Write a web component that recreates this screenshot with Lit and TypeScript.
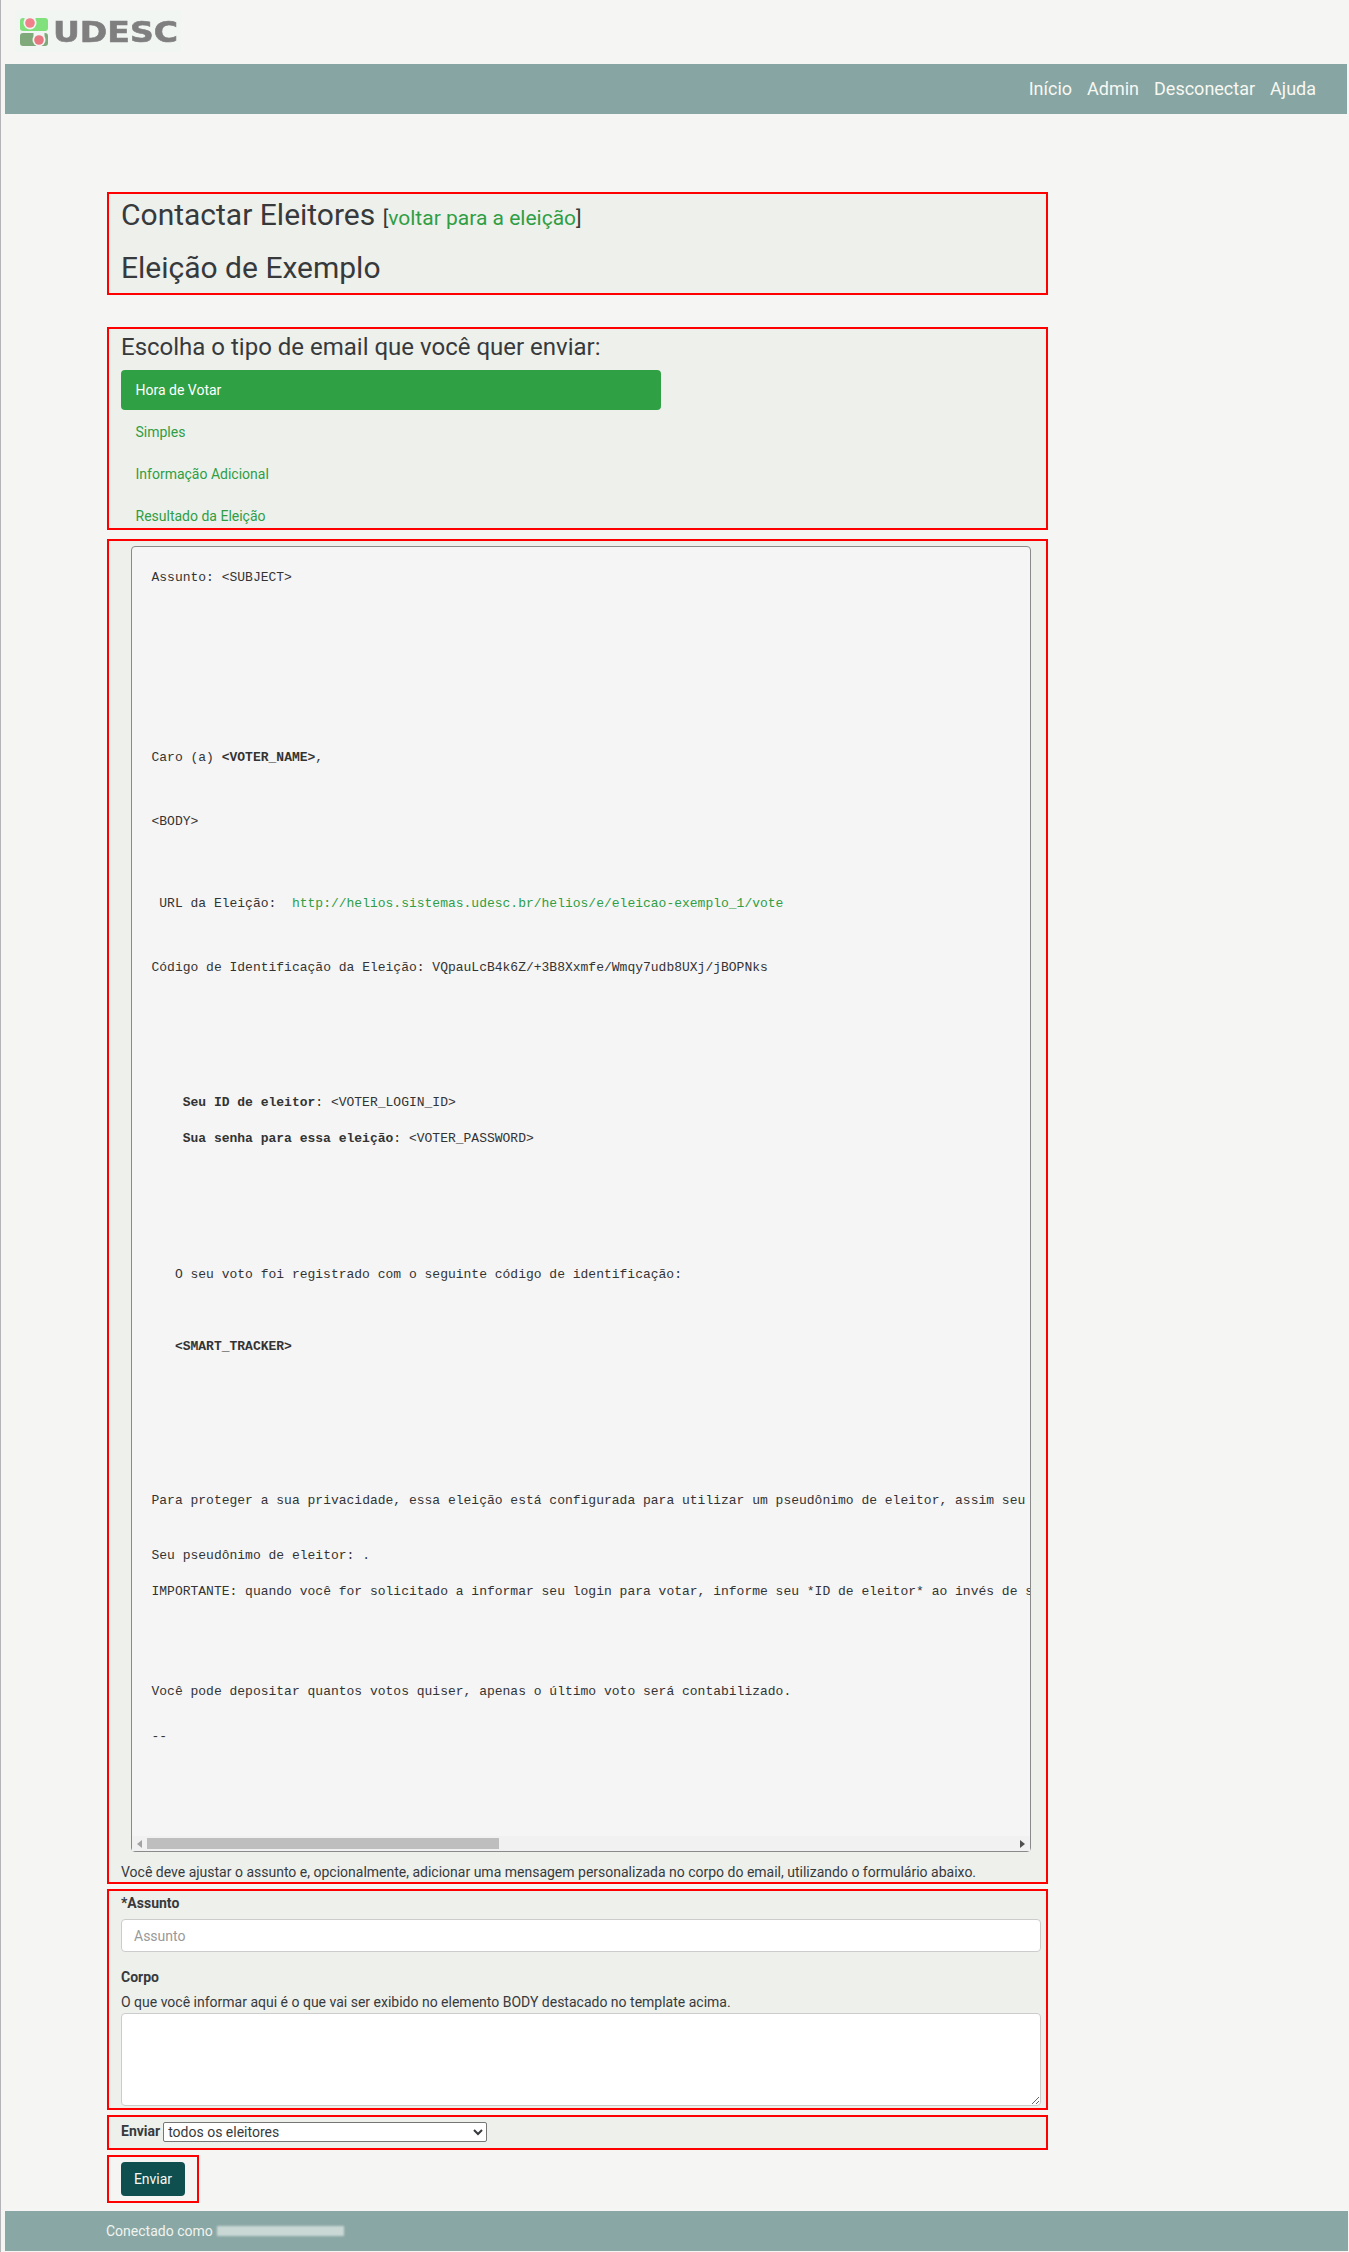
import { LitElement, html, css } from 'lit';
import { customElement } from 'lit/decorators.js';

type Line = { gap: number; indent?: number; content: unknown };

// gap = space above the line, indent in monospace chars
const LINES: Line[] = [
  { gap: 0, content: 'Assunto: <SUBJECT>' },
  { gap: 162, content: html`Caro (a) <strong>&lt;VOTER_NAME&gt;</strong>,` },
  { gap: 46, content: '<BODY>' },
  { gap: 64, indent: 1, content: html`URL da Eleição:  <a href="#">http://helios.sistemas.udesc.br/helios/e/eleicao-exemplo_1/vote</a>` },
  { gap: 46, content: 'Código de Identificação da Eleição: VQpauLcB4k6Z/+3B8Xxmfe/Wmqy7udb8UXj/jBOPNks' },
  { gap: 117, indent: 4, content: html`<strong>Seu ID de eleitor</strong>: &lt;VOTER_LOGIN_ID&gt;` },
  { gap: 18, indent: 4, content: html`<strong>Sua senha para essa eleição</strong>: &lt;VOTER_PASSWORD&gt;` },
  { gap: 118, indent: 3, content: 'O seu voto foi registrado com o seguinte código de identificação:' },
  { gap: 54, indent: 3, content: html`<strong>&lt;SMART_TRACKER&gt;</strong>` },
  { gap: 136, content: 'Para proteger a sua privacidade, essa eleição está configurada para utilizar um pseudônimo de eleitor, assim seu voto não será associado ao seu nome.' },
  { gap: 37, content: 'Seu pseudônimo de eleitor: .' },
  { gap: 18, content: 'IMPORTANTE: quando você for solicitado a informar seu login para votar, informe seu *ID de eleitor* ao invés de seu login habitual.' },
  { gap: 82, content: 'Você pode depositar quantos votos quiser, apenas o último voto será contabilizado.' },
  { gap: 27, content: '--' },
];

const NAV = ['Início', 'Admin', 'Desconectar', 'Ajuda'];
const TEMPLATES = ['Hora de Votar', 'Simples', 'Informação Adicional', 'Resultado da Eleição'];

@customElement('app-root')
export class AppRoot extends LitElement {
  static styles = css`
    :host {
      display: block;
      box-sizing: border-box;
      width: 1349px;
      height: 2252px;
      border-left: 1px solid #b4b4b8;
      background: #f5f5f3;
      color: #373a3c;
      font-family: Roboto, "Liberation Sans", sans-serif;
      font-size: 14px;
      line-height: 21px;
      overflow: hidden;
    }

    a {
      color: #2f9e44;
      text-decoration: none;
    }

    .top {
      height: 64px;
      padding: 10px 0 0 14px;
      box-sizing: border-box;
    }

    .logo {
      display: block;
      width: 166px;
      height: 42px;
      background: #f2f6f3;
    }

    .logo-text {
      font-family: "DejaVu Sans", sans-serif;
      font-weight: 700;
      font-size: 29px;
      fill: #7f7f7f;
      stroke: #7f7f7f;
      stroke-width: 0.6px;
    }

    .navbar {
      display: flex;
      justify-content: flex-end;
      align-items: center;
      gap: 15px;
      height: 50px;
      box-sizing: border-box;
      margin: 0 2px 0 4px;
      padding: 0 31px 2px 0;
      background: #86a5a3;
    }

    .navbar a {
      color: #f8f8f2;
      font-size: 18px;
    }

    main {
      width: 941px;
      margin: 78px 0 0 106px;
    }

    .box {
      box-sizing: border-box;
      border: 2px solid #f00;
      background: #eef0ec;
      padding: 0 5px 0 12px;
    }

    .title {
      height: 103px;
    }

    .title h2,
    .title h3 {
      margin: 0;
      font-size: 30px;
      font-weight: 400;
      line-height: 42px;
    }

    .title h3 {
      margin-top: 11px;
    }

    .title small {
      font-size: 21px;
      line-height: 1;
    }

    .choose {
      margin-top: 32px;
    }

    .choose h4 {
      margin: 0;
      font-size: 24px;
      font-weight: 400;
      line-height: 36px;
    }

    .pills {
      display: flex;
      flex-direction: column;
      gap: 2px;
      margin: 5px 0 -8px;
    }

    .pills a {
      display: block;
      width: 540px;
      height: 40px;
      box-sizing: border-box;
      padding: 9.5px 14.5px;
      border-radius: 4px;
    }

    .pills a.active {
      background: #30a045;
      color: #fff;
    }

    .preview {
      margin-top: 9px;
      padding-top: 5px;
    }

    .mail {
      display: flex;
      flex-direction: column;
      box-sizing: border-box;
      width: 900px;
      height: 1306px;
      margin-left: 10px;
      border: 1px solid #8a8a8a;
      border-radius: 4px;
      background: #f5f5f5;
    }

    .mail-body {
      flex: 1;
      overflow: hidden;
      padding: 22px 0 0 19.5px;
      font-family: "Liberation Mono", monospace;
      font-size: 13px;
      line-height: 18px;
      color: #333;
    }

    .mail-line {
      white-space: pre;
    }

    .scrollbar {
      display: flex;
      height: 15px;
      background: #f1f1f1;
    }

    .scroll-btn {
      display: flex;
      align-items: center;
      justify-content: center;
      width: 15px;
    }

    .scroll-track {
      flex: 1;
      padding-top: 2px;
    }

    .scroll-thumb {
      width: 352px;
      height: 11px;
      background: #bebebe;
    }

    .hint {
      margin: 11px 0 0;
      line-height: 19px;
    }

    .fields {
      margin-top: 5px;
      padding-top: 2px;
      padding-bottom: 2px;
    }

    label {
      display: block;
      font-weight: 700;
    }

    .control {
      display: block;
      box-sizing: border-box;
      width: 920px;
      border: 1px solid #ccc;
      border-radius: 4px;
      background: #fff;
      font: inherit;
      padding: 5px 12px;
      outline: none;
    }

    input.control {
      height: 33px;
      margin-top: 5px;
    }

    input.control::placeholder {
      color: #999;
      opacity: 1;
    }

    .corpo {
      margin-top: 15px;
    }

    .help {
      margin: 4px 0 0;
    }

    textarea.control {
      height: 93px;
      resize: vertical;
    }

    .send-to {
      display: flex;
      align-items: center;
      gap: 3px;
      margin-top: 5px;
      padding-top: 4px;
      padding-bottom: 6px;
    }

    .send-to select {
      box-sizing: border-box;
      width: 324px;
      height: 20px;
      padding: 0;
      font: inherit;
      color: #373a3c;
      background: #fff;
      border: 1px solid #767676;
      border-radius: 2px;
    }

    .submit {
      width: 92px;
      margin-top: 5px;
      padding: 5px 12px;
      background: transparent;
    }

    .submit button {
      display: block;
      width: 64px;
      height: 34px;
      padding: 0;
      border: 0;
      border-radius: 4px;
      background: #0f4f4f;
      color: #f8f8f2;
      font: inherit;
    }

    footer {
      display: flex;
      align-items: center;
      gap: 4px;
      height: 40px;
      margin: 8px 1px 0 4px;
      padding-left: 101px;
      background: #89a7a5;
      color: #f0f4ef;
    }

    .masked {
      width: 127px;
      height: 10px;
      background: #c9d8d5;
      filter: blur(1px);
    }
  `;

  renderLogo() {
    return html`
      <svg class="logo" viewBox="0 0 166 42" role="img" aria-label="UDESC">
        <g style="filter: blur(0.6px)">
          <rect x="5" y="8" width="28" height="13" rx="3" fill="#80e07c" />
          <rect x="5" y="23" width="28" height="13" rx="3" fill="#7fa97a" />
          <circle cx="15" cy="13" r="6.5" fill="#f2f6f3" />
          <rect x="9.5" y="6" width="11" height="7" fill="#f2f6f3" />
          <circle cx="24" cy="30" r="6.5" fill="#f2f6f3" />
          <rect x="18.5" y="22" width="11" height="8" fill="#f2f6f3" />
          <circle cx="15" cy="13" r="4.8" fill="#f0808a" />
          <circle cx="24" cy="30" r="4.8" fill="#e87680" />
          <text class="logo-text" x="38" y="32" textLength="125" lengthAdjust="spacingAndGlyphs">UDESC</text>
        </g>
      </svg>
    `;
  }

  render() {
    return html`
      <div class="top">${this.renderLogo()}</div>
      <nav class="navbar">${NAV.map((item) => html`<a href="#">${item}</a>`)}</nav>

      <main>
        <section class="box title">
          <h2>Contactar Eleitores <small>[<a href="#">voltar para a eleição</a>]</small></h2>
          <h3>Eleição de Exemplo</h3>
        </section>

        <section class="box choose">
          <h4>Escolha o tipo de email que você quer enviar:</h4>
          <div class="pills">
            ${TEMPLATES.map((name, i) => html`<a href="#" class=${i === 0 ? 'active' : ''}>${name}</a>`)}
          </div>
        </section>

        <section class="box preview">
          <div class="mail">
            <div class="mail-body">
              ${LINES.map((line) => html`<div class="mail-line" style="margin-top:${line.gap}px;padding-left:${(line.indent ?? 0) * 7.8}px">${line.content}</div>`)}
            </div>
            <div class="scrollbar">
              <div class="scroll-btn">
                <svg width="5" height="8" viewBox="0 0 5 8"><polygon points="5,0 5,8 0,4" fill="#a3a3a3" /></svg>
              </div>
              <div class="scroll-track"><div class="scroll-thumb"></div></div>
              <div class="scroll-btn">
                <svg width="5" height="8" viewBox="0 0 5 8"><polygon points="0,0 0,8 5,4" fill="#505050" /></svg>
              </div>
            </div>
          </div>
          <p class="hint">Você deve ajustar o assunto e, opcionalmente, adicionar uma mensagem personalizada no corpo do email, utilizando o formulário abaixo.</p>
        </section>

        <section class="box fields">
          <label>*Assunto</label>
          <input class="control" type="text" placeholder="Assunto" />
          <label class="corpo">Corpo</label>
          <p class="help">O que você informar aqui é o que vai ser exibido no elemento BODY destacado no template acima.</p>
          <textarea class="control"></textarea>
        </section>

        <section class="box send-to">
          <label>Enviar</label>
          <select><option>todos os eleitores</option></select>
        </section>

        <section class="box submit">
          <button type="button">Enviar</button>
        </section>
      </main>

      <footer>
        <span>Conectado como</span>
        <span class="masked"></span>
      </footer>
    `;
  }
}
